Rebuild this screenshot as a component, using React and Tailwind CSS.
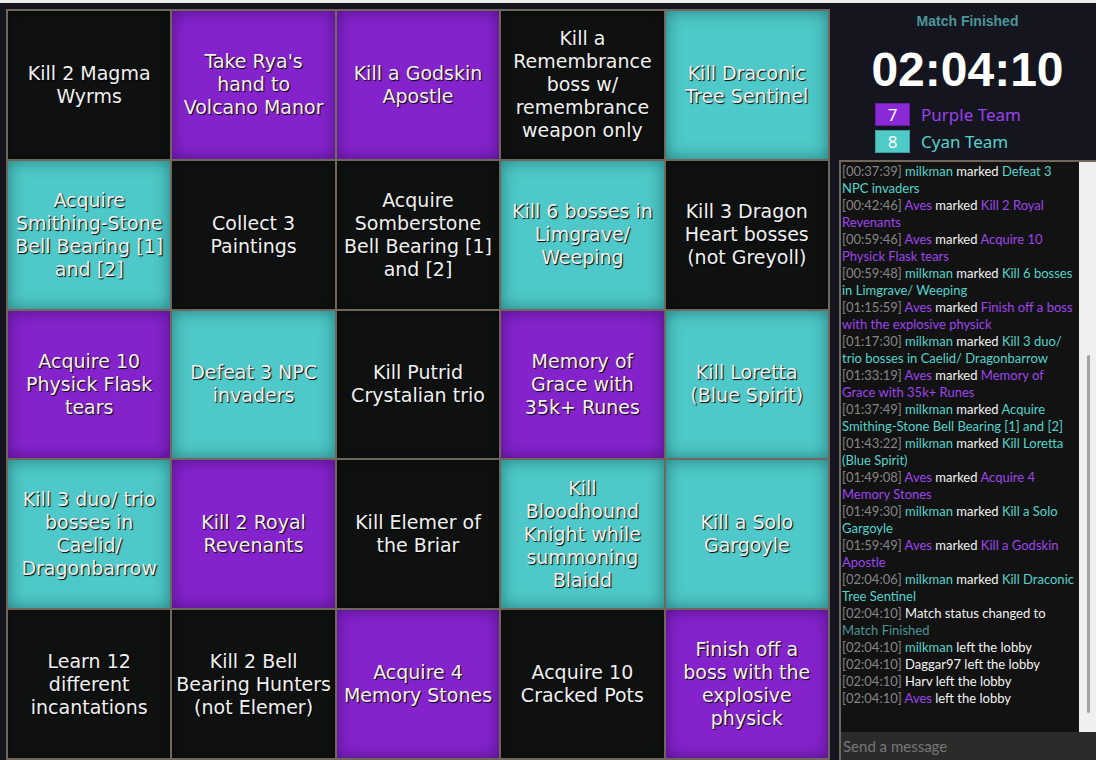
import React from "react";

const B = "b", P = "p", C = "c";
const cells = [
  [B, ["Kill 2 Magma", "Wyrms"]],
  [P, ["Take Rya's", "hand to", "Volcano Manor"]],
  [P, ["Kill a Godskin", "Apostle"]],
  [B, ["Kill a", "Remembrance", "boss w/", "remembrance", "weapon only"]],
  [C, ["Kill Draconic", "Tree Sentinel"]],
  [C, ["Acquire", "Smithing-Stone", "Bell Bearing [1]", "and [2]"]],
  [B, ["Collect 3", "Paintings"]],
  [B, ["Acquire", "Somberstone", "Bell Bearing [1]", "and [2]"]],
  [C, ["Kill 6 bosses in", "Limgrave/", "Weeping"]],
  [B, ["Kill 3 Dragon", "Heart bosses", "(not Greyoll)"]],
  [P, ["Acquire 10", "Physick Flask", "tears"]],
  [C, ["Defeat 3 NPC", "invaders"]],
  [B, ["Kill Putrid", "Crystalian trio"]],
  [P, ["Memory of", "Grace with", "35k+ Runes"]],
  [C, ["Kill Loretta", "(Blue Spirit)"]],
  [C, ["Kill 3 duo/ trio", "bosses in", "Caelid/", "Dragonbarrow"]],
  [P, ["Kill 2 Royal", "Revenants"]],
  [B, ["Kill Elemer of", "the Briar"]],
  [C, ["Kill", "Bloodhound", "Knight while", "summoning", "Blaidd"]],
  [C, ["Kill a Solo", "Gargoyle"]],
  [B, ["Learn 12", "different", "incantations"]],
  [B, ["Kill 2 Bell", "Bearing Hunters", "(not Elemer)"]],
  [P, ["Acquire 4", "Memory Stones"]],
  [B, ["Acquire 10", "Cracked Pots"]],
  [P, ["Finish off a", "boss with the", "explosive", "physick"]],
];

const cellClass = {
  b: "bg-[#0f1111] shadow-[inset_0_0_10px_rgba(0,0,0,0.5)]",
  p: "bg-[#8423cc] shadow-[inset_0_0_16px_rgba(40,0,70,0.55)]",
  c: "bg-[#4ec8c8] shadow-[inset_0_0_16px_rgba(0,50,50,0.5)]",
};

const CY = "text-[#55d2cc]";
const PU = "text-[#9d45ec]";
const WH = "text-[#f2f2f2]";
const TS = "text-[#858585]";
const TE = "text-[#4a9696]";

const log = [
  ["00:37:39", [["milkman", CY], [" marked ", WH], ["Defeat 3 NPC invaders", CY]]],
  ["00:42:46", [["Aves", PU], [" marked ", WH], ["Kill 2 Royal Revenants", PU]]],
  ["00:59:46", [["Aves", PU], [" marked ", WH], ["Acquire 10 Physick Flask tears", PU]]],
  ["00:59:48", [["milkman", CY], [" marked ", WH], ["Kill 6 bosses in Limgrave/ Weeping", CY]]],
  ["01:15:59", [["Aves", PU], [" marked ", WH], ["Finish off a boss with the explosive physick", PU]]],
  ["01:17:30", [["milkman", CY], [" marked ", WH], ["Kill 3 duo/ trio bosses in Caelid/ Dragonbarrow", CY]]],
  ["01:33:19", [["Aves", PU], [" marked ", WH], ["Memory of Grace with 35k+ Runes", PU]]],
  ["01:37:49", [["milkman", CY], [" marked ", WH], ["Acquire Smithing-Stone Bell Bearing [1] and [2]", CY]]],
  ["01:43:22", [["milkman", CY], [" marked ", WH], ["Kill Loretta (Blue Spirit)", CY]]],
  ["01:49:08", [["Aves", PU], [" marked ", WH], ["Acquire 4 Memory Stones", PU]]],
  ["01:49:30", [["milkman", CY], [" marked ", WH], ["Kill a Solo Gargoyle", CY]]],
  ["01:59:49", [["Aves", PU], [" marked ", WH], ["Kill a Godskin Apostle", PU]]],
  ["02:04:06", [["milkman", CY], [" marked ", WH], ["Kill Draconic Tree Sentinel", CY]]],
  ["02:04:10", [["Match status changed to ", WH], ["Match Finished", TE]]],
  ["02:04:10", [["milkman", CY], [" left the lobby", WH]]],
  ["02:04:10", [["Daggar97 left the lobby", WH]]],
  ["02:04:10", [["Harv left the lobby", WH]]],
  ["02:04:10", [["Aves", PU], [" left the lobby", WH]]],
];

export default function App() {
  return (
    <div className="h-[760px] w-[1096px] overflow-hidden bg-[#15151f] flex flex-col">
      <div className="h-[3px] bg-[#ececec]" />
      <div className="flex flex-1 min-h-0">
        <div className="pl-[6px] pt-[6px]">
          <div className="grid grid-cols-5 grid-rows-5 gap-[2px] p-[2px] bg-[#6f675c] w-[824px] h-[751px]">
            {cells.map(([k, lines], i) => (
              <div
                key={i}
                className={`${cellClass[k]} flex flex-col items-center justify-center text-center text-[#f0f0f0] text-[19px] leading-[23px] font-['DejaVu_Sans',sans-serif] [text-shadow:1px_1px_1px_#000] overflow-hidden`}
              >
                {lines.map((l, j) => (
                  <span key={j} className="whitespace-nowrap">{l}</span>
                ))}
              </div>
            ))}
          </div>
        </div>
        <div className="flex-1 pl-[9px] flex flex-col min-w-0">
          <div className="flex flex-col items-center pt-[10px] font-['Liberation_Sans',sans-serif]">
            <div className="text-[14px] leading-[17px] font-bold text-[#4b9696]">Match Finished</div>
            <div className="mt-[16px] text-[48px] leading-[48px] font-bold text-white">02:04:10</div>
          </div>
          <div className="mt-[9px] pl-[36px] flex flex-col gap-[4px] font-['Noto_Sans',sans-serif]">
            <div className="flex items-center h-[23px]">
              <div className="w-[35px] h-[23px] bg-[#8a2ad6] border border-[#6a1ea8] flex items-center justify-center text-white text-[17px] leading-[21px]">7</div>
              <div className="ml-[11px] text-[17px] leading-[23px] text-[#9a42ea]">Purple Team</div>
            </div>
            <div className="flex items-center h-[23px]">
              <div className="w-[35px] h-[23px] bg-[#4ecbc6] border border-[#3a9e9a] flex items-center justify-center text-white text-[17px] leading-[21px]">8</div>
              <div className="ml-[11px] text-[17px] leading-[23px] text-[#55d2cc]">Cyan Team</div>
            </div>
          </div>
          <div className="mt-[7px] flex-1 min-h-0 border-l-2 border-t-2 border-[#6f675c] flex flex-col bg-[#121212]">
            <div className="flex flex-1 min-h-0">
              <div className="flex-1 pl-[1px] pt-[1px] text-[13px] leading-[17px] font-['Lato',sans-serif]">
                {log.map(([t, parts], i) => (
                  <div key={i}>
                    <span className={TS}>[{t}] </span>
                    {parts.map(([s, c], j) => (
                      <span key={j} className={c}>{s}</span>
                    ))}
                  </div>
                ))}
              </div>
              <div className="w-[17px] bg-[#f0f0f0] flex flex-col">
                <div className="mt-[193px] ml-[8px] w-[3px] h-[358px] rounded-full bg-[#a3a3a3]" />
              </div>
            </div>
            <div className="h-[28px] bg-[#2b2b2b] flex items-center pl-[2px] text-[15px] text-[#777] font-['Lato',sans-serif]">
              Send a message
            </div>
          </div>
        </div>
      </div>
    </div>
  );
}
